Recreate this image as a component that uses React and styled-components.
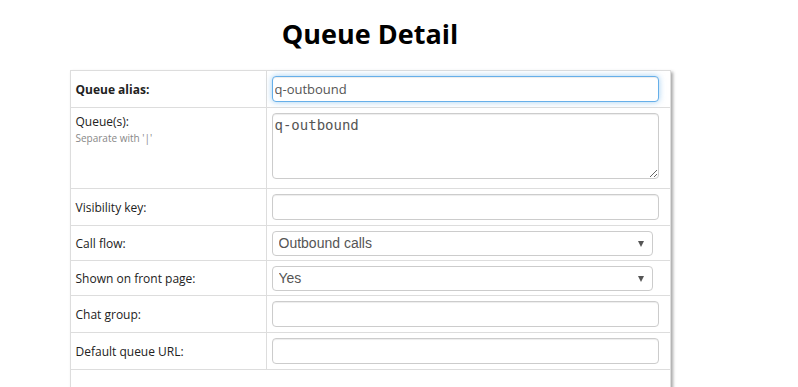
import styled, { createGlobalStyle, css } from 'styled-components'

const GlobalStyle = createGlobalStyle`
    body {
        margin: 0;
        background: #fff;
        font-family: 'Open Sans', sans-serif;
    }
`

export default function App() {
    return (
        <>
            <GlobalStyle />
            <Page>
                <Title>Queue Detail</Title>
                <FormTable>
                    <Label $bold $h={37}>Queue alias:</Label>
                    <Value $h={37}>
                        <TextInput $focused defaultValue="q-outbound" />
                    </Value>

                    <Label $top $h={81}>
                        <span>Queue(s):</span>
                        <Hint>Separate with '|'</Hint>
                    </Label>
                    <Value $top $h={81}>
                        <TextArea defaultValue="q-outbound" />
                    </Value>

                    <Label $h={37}>Visibility key:</Label>
                    <Value $h={37}>
                        <TextInput />
                    </Value>

                    <Label $h={35}>Call flow:</Label>
                    <Value $h={35}>
                        <SelectWrap>
                            <Select defaultValue="out">
                                <option value="in">Inbound calls</option>
                                <option value="out">Outbound calls</option>
                            </Select>
                        </SelectWrap>
                    </Value>

                    <Label $h={35}>Shown on front page:</Label>
                    <Value $h={35}>
                        <SelectWrap>
                            <Select defaultValue="yes">
                                <option value="yes">Yes</option>
                                <option value="no">No</option>
                            </Select>
                        </SelectWrap>
                    </Value>

                    <Label $h={37}>Chat group:</Label>
                    <Value $h={37}>
                        <TextInput />
                    </Value>

                    <Label $h={37}>Default queue URL:</Label>
                    <Value $h={37}>
                        <TextInput />
                    </Value>

                    <Footer />
                </FormTable>
            </Page>
        </>
    )
}

const Page = styled.div`
    width: 740px;
    display: flex;
    flex-direction: column;
    align-items: center;
`

const Title = styled.h1`
    margin: 15px 0 17px;
    font-family: 'Open Sans', sans-serif;
    font-size: 27px;
    line-height: 38px;
    font-weight: 700;
    color: #000;
`

const FormTable = styled.div`
    display: grid;
    grid-template-columns: 196px 404px;
    border-top: 1px solid #ddd;
    border-left: 1px solid #ddd;
    box-shadow: 2px 2px 3px rgba(0, 0, 0, 0.35);
`

const cell = css`
    box-sizing: border-box;
    height: ${(p) => p.$h}px;
    border-right: 1px solid #ddd;
    border-bottom: 1px solid #ddd;
    display: flex;
    flex-direction: column;
    justify-content: ${(p) => (p.$top ? 'flex-start' : 'center')};
`

const Label = styled.div`
    ${cell}
    padding: ${(p) => (p.$top ? '5px' : '0')} 5px 0;
    font-size: 12px;
    line-height: 17px;
    color: #222;
    font-weight: ${(p) => (p.$bold ? 700 : 400)};
`

const Hint = styled.span`
    font-size: 10px;
    line-height: 14px;
    color: #888;
    margin-top: 1px;
`

const Value = styled.div`
    ${cell}
    padding: ${(p) => (p.$top ? '5px' : '0')} 11px 0 5px;
`

const field = css`
    box-sizing: border-box;
    width: 100%;
    border: 1px solid #ccc;
    border-radius: 4px;
    background: #fff;
    color: #555;
    outline: none;
    margin: 0;
`

const TextInput = styled.input`
    ${field}
    height: 26px;
    padding: 0 2px;
    font-family: 'Open Sans', sans-serif;
    font-size: 13px;
    box-shadow: inset 0 1px 1px rgba(0, 0, 0, 0.075);
    ${(p) =>
        p.$focused &&
        css`
            border-color: #66afe9;
            box-shadow: inset 0 1px 1px rgba(0, 0, 0, 0.075), 0 0 6px rgba(102, 175, 233, 0.6);
        `}
`

const TextArea = styled.textarea`
    ${field}
    display: block;
    height: 66px;
    padding: 3px 2px;
    font-family: 'DejaVu Sans Mono', monospace;
    font-size: 14px;
    line-height: 17px;
    resize: vertical;
    box-shadow: inset 0 1px 1px rgba(0, 0, 0, 0.075);
`

const SelectWrap = styled.div`
    position: relative;
    width: 381px;

    &::after {
        content: '';
        position: absolute;
        right: 9px;
        top: 10px;
        border-left: 3.5px solid transparent;
        border-right: 3.5px solid transparent;
        border-top: 6px solid #555;
        pointer-events: none;
    }
`

const Select = styled.select`
    ${field}
    appearance: none;
    display: block;
    height: 25px;
    padding: 0 20px 0 6px;
    font-family: 'Liberation Sans', Arial, sans-serif;
    font-size: 14px;
`

const Footer = styled.div`
    grid-column: 1 / -1;
    height: 40px;
    border-right: 1px solid #ddd;
`
